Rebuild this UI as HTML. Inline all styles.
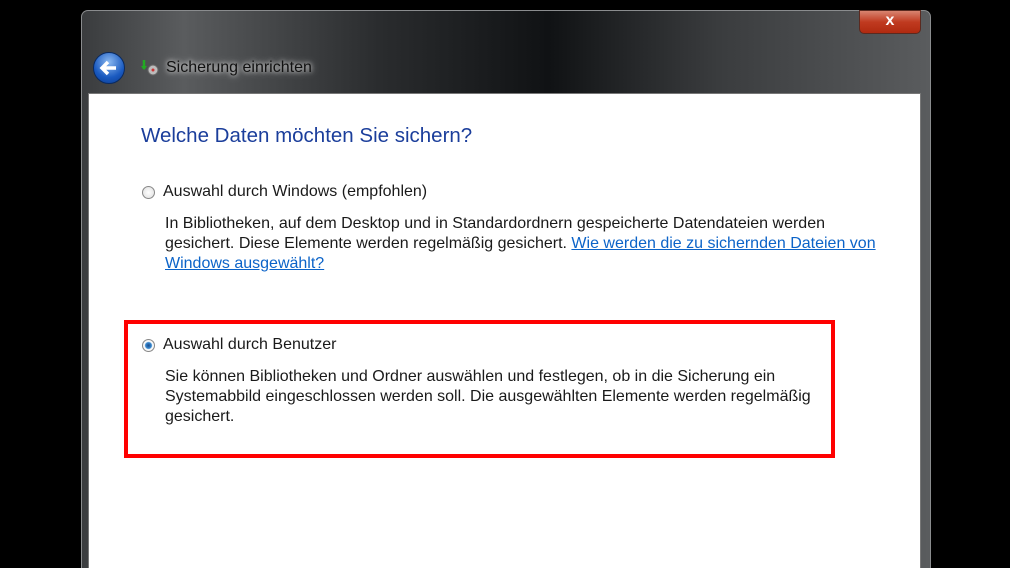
<!DOCTYPE html>
<html><head><meta charset="utf-8"><style>
html,body{margin:0;width:1010px;height:568px;overflow:hidden}
body{background:#000;position:relative;font-family:"Liberation Sans",sans-serif;}
.frame{position:absolute;left:81px;top:10px;width:850px;height:558px;border-radius:7px 7px 0 0;background:linear-gradient(90deg,#3a3c3e 0%,#5a5c5e 12%,#2a2c2e 35%,#101214 55%,#3a3c3e 75%,#5a5c5e 100%);border:1px solid #8a8c8e;border-bottom:none;box-sizing:border-box}
.white{position:absolute;left:88px;top:93px;width:833px;height:480px;background:#fff;border:1px solid #777;box-sizing:border-box}
.close{position:absolute;left:859px;top:10px;width:62px;height:24px;border-radius:0 0 5px 5px;background:linear-gradient(#d88470,#c03a20 50%,#b02a10);border:1px solid #5a2a20;box-sizing:border-box;color:#fff;font:bold 16px "Liberation Sans";text-align:center;line-height:20px}
.back{position:absolute;left:93px;top:52px;width:32px;height:32px;border-radius:50%;background:radial-gradient(circle at 50% 30%,#8ab8f0,#1a5ac0 60%,#0a3a90);border:1px solid #0a2a60;box-sizing:border-box}
.ttl{position:absolute;left:166px;top:59px;color:#111;font-size:16px;text-shadow:0 0 8px #ccc,0 0 4px #ddd}
.t{position:absolute;color:#1a1a1a;font-size:16px;line-height:20px;white-space:nowrap}
.h{position:absolute;left:141px;top:124px;color:#1b3e9b;font-size:20.5px}
.radio{position:absolute;width:13px;height:13px;border-radius:50%;border:1px solid #888;background:radial-gradient(#fff,#ddd);box-sizing:border-box}
a{color:#0b63c8;text-decoration:underline}
.red{position:absolute;left:124px;top:320px;width:711px;height:138px;border:4px solid #f00;box-sizing:border-box}
</style></head><body>
<div class="frame"></div>
<div class="close">x</div>
<div class="back"><svg width="30" height="30" viewBox="0 0 30 30"><path d="M22 15H9M14 9l-6 6 6 6" stroke="#fff" stroke-width="3.5" fill="none"/></svg></div>
<svg style="position:absolute;left:139px;top:58px" width="22" height="20"><path d="M5 2v9" stroke="#2a2" stroke-width="2.5"/><path d="M2 8l3 4 3-4z" fill="#2a2"/><circle cx="14" cy="12" r="5" fill="#bbb" stroke="#666"/><circle cx="14" cy="12" r="1.5" fill="#c33"/></svg>
<div class="ttl">Sicherung einrichten</div>
<div class="white"></div>
<div class="h">Welche Daten möchten Sie sichern?</div>
<div class="radio" style="left:142px;top:186px"></div>
<div class="t" style="left:163px;top:182px">Auswahl durch Windows (empfohlen)</div>
<div class="t" style="left:165px;top:214px">In Bibliotheken, auf dem Desktop und in Standardordnern gespeicherte Datendateien werden<br>gesichert. Diese Elemente werden regelmäßig gesichert. <a>Wie werden die zu sichernden Dateien von</a><br><a>Windows ausgewählt?</a></div>
<div class="red"></div>
<div class="radio" style="left:142px;top:339px;background:radial-gradient(circle,#1a4a8a 0,#3a8ad0 3px,#fff 4px,#ddd)"></div>
<div class="t" style="left:163px;top:335px">Auswahl durch Benutzer</div>
<div class="t" style="left:165px;top:367px">Sie können Bibliotheken und Ordner auswählen und festlegen, ob in die Sicherung ein<br>Systemabbild eingeschlossen werden soll. Die ausgewählten Elemente werden regelmäßig<br>gesichert.</div>
</body></html>
